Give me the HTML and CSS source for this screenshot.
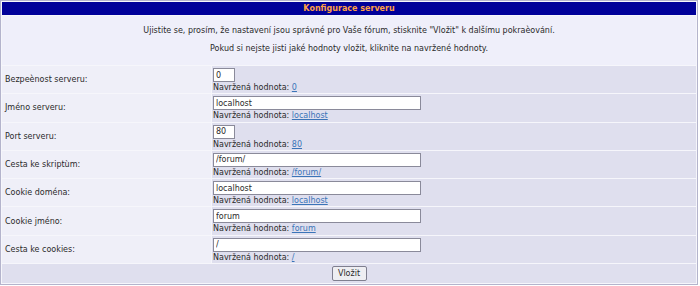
FILE: index.html
```html
<!DOCTYPE html>
<html>
<head>
<meta charset="utf-8">
<link rel="stylesheet" href="styles.css">
</head>
<body>
<form class="form">
<table class="forumline">
  <tr><th class="head" colspan="2">Konfigurace serveru</th></tr>
  <tr><td class="msg" colspan="2">
    <p>Ujistite se, prosím, že nastavení jsou správné pro Vaše fórum, stisknìte "Vložit" k dalšímu pokraèování.</p>
    <p>Pokud si nejste jisti jaké hodnoty vložit, kliknìte na navržené hodnoty.</p>
  </td></tr>
  <tr><td class="lbl">Bezpeènost serveru:</td><td class="val"><input class="inp short" type="text" value="0"><div class="hint">Navržená hodnota: <a href="#">0</a></div></td></tr>
  <tr><td class="lbl">Jméno serveru:</td><td class="val"><input class="inp wide" type="text" value="localhost"><div class="hint">Navržená hodnota: <a href="#">localhost</a></div></td></tr>
  <tr><td class="lbl">Port serveru:</td><td class="val"><input class="inp short" type="text" value="80"><div class="hint">Navržená hodnota: <a href="#">80</a></div></td></tr>
  <tr><td class="lbl">Cesta ke skriptùm:</td><td class="val"><input class="inp wide" type="text" value="/forum/"><div class="hint">Navržená hodnota: <a href="#">/forum/</a></div></td></tr>
  <tr><td class="lbl">Cookie doména:</td><td class="val"><input class="inp wide" type="text" value="localhost"><div class="hint">Navržená hodnota: <a href="#">localhost</a></div></td></tr>
  <tr><td class="lbl">Cookie jméno:</td><td class="val"><input class="inp wide" type="text" value="forum"><div class="hint">Navržená hodnota: <a href="#">forum</a></div></td></tr>
  <tr><td class="lbl">Cesta ke cookies:</td><td class="val"><input class="inp wide" type="text" value="/"><div class="hint">Navržená hodnota: <a href="#">/</a></div></td></tr>
  <tr><td class="foot" colspan="2"><button class="btn" type="button">Vložit</button></td></tr>
</table>
</form>
</body>
</html>
```
FILE: styles.css
```css
html, body {
  margin: 0;
  padding: 0;
  background: #ffffff;
}
body {
  font-family: "DejaVu Sans", Verdana, sans-serif;
  font-size: 8px;
  color: #2a2a2a;
}
.form {
  margin: 0;
}
.forumline {
  width: 698px;
  border: 1px solid #b4b4cc;
  border-spacing: 1px;
  background: #f6f6fb;
}
.head {
  padding: 0;
  height: 13px;
  background: #000099;
  color: #ff9f45;
  font-weight: bold;
  font-size: 8px;
  line-height: 13px;
  text-align: center;
}
.msg {
  background: #efeffa;
  text-align: center;
  padding: 9px 0 10px 0;
}
.msg p {
  margin: 0;
  line-height: 12px;
}
.msg p + p {
  margin-top: 6px;
}
.lbl {
  width: 206px;
  background: #efeff8;
  padding: 0 0 0 3px;
  vertical-align: middle;
}
.val {
  background: #dfdfee;
  vertical-align: top;
  padding: 2px 0 1px 1px;
}
.inp {
  display: block;
  box-sizing: border-box;
  height: 14px;
  margin: 0;
  padding: 0 2px;
  border: 1px solid #8a8a9a;
  background: #ffffff;
  font-family: "DejaVu Sans", Verdana, sans-serif;
  font-size: 8px;
  color: #2a2a2a;
}
.short {
  width: 22px;
}
.wide {
  width: 208px;
}
.hint {
  height: 10.3px;
  line-height: 11px;
  color: #2a2a2a;
}
.hint a {
  color: #3a74b8;
  text-decoration: underline;
}
.foot {
  padding: 0;
  background: #dfdfee;
  text-align: center;
  height: 19px;
  vertical-align: middle;
}
.btn {
  box-sizing: border-box;
  height: 15px;
  width: 35px;
  padding: 0;
  border: 1px solid #7f7f8f;
  border-radius: 2px;
  background: #eeeef2;
  font-family: "DejaVu Sans", Verdana, sans-serif;
  font-size: 8px;
  color: #2a2a2a;
}
```
